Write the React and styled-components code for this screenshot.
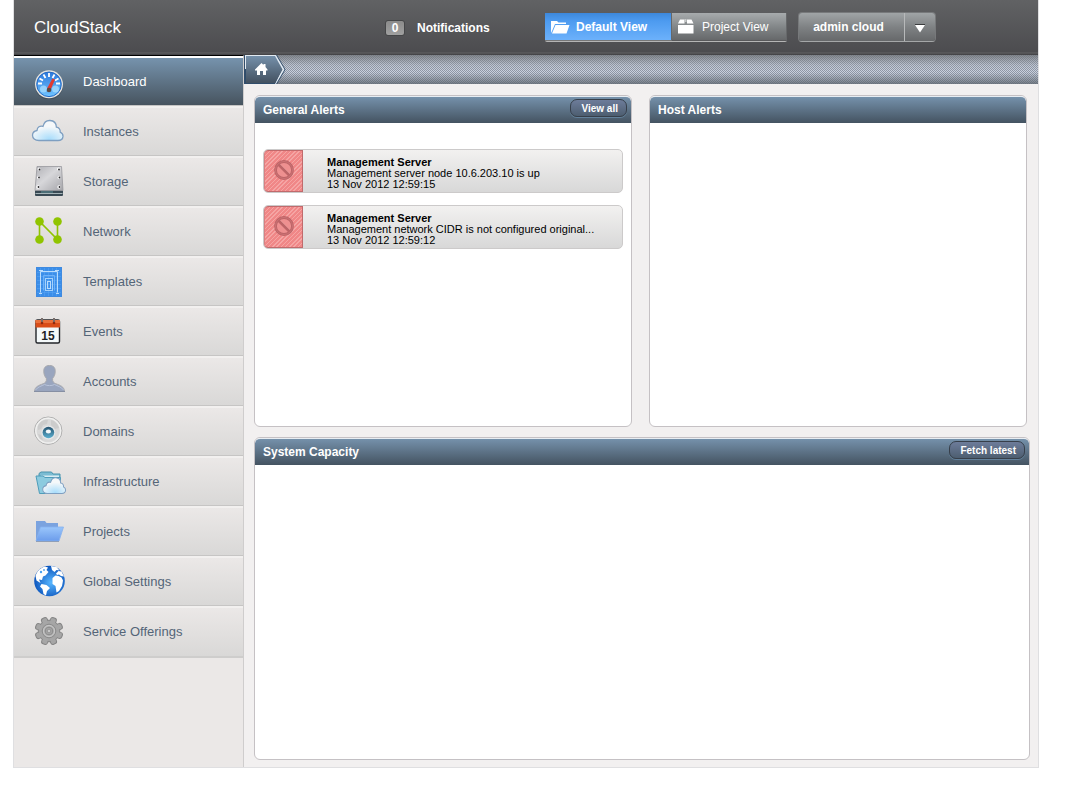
import styled, { createGlobalStyle } from "styled-components";

const GlobalStyle = createGlobalStyle`
  * {
    box-sizing: border-box;
  }
  body {
    margin: 0;
    background: #ffffff;
    font-family: "Liberation Sans", Arial, sans-serif;
    font-size: 12px;
  }
  button {
    font-family: inherit;
    cursor: pointer;
  }
`;

const Page = styled.div`
  display: flex;
  min-height: 100vh;
  padding: 0 49px 29px 13px;
`;

const Container = styled.div`
  flex: 1;
  display: flex;
  flex-direction: column;
  border: 1px solid #dfdfe1;
  border-top: 0;
  background: #f2f0f0;
`;

const Header = styled.header`
  display: flex;
  align-items: flex-start;
  height: 55px;
  padding: 12px 0 0 20px;
  color: #ffffff;
  background: linear-gradient(#616264, #4c4c4f 52px, #626264 53px, #454548 54px);
`;

const Brand = styled.h1`
  width: 351px;
  margin: 0;
  font-size: 17px;
  font-weight: normal;
  line-height: 31px;
`;

const Notifications = styled.button`
  display: flex;
  align-items: center;
  gap: 12px;
  width: 160px;
  height: 31px;
  padding: 0;
  border: 0;
  background: none;
  color: #ffffff;
  font-size: 12px;
  font-weight: bold;
`;

const Count = styled.span`
  width: 20px;
  height: 16px;
  border: 1px solid #454648;
  border-radius: 3px;
  background: linear-gradient(#8b8b8b, #a0a0a0);
  line-height: 15px;
  text-align: center;
`;

const ViewSwitch = styled.div`
  display: flex;
  width: 242px;
  height: 29px;
  margin: 1px 11px 0 0;
  border-bottom: 1px solid #b5b5b5;
  border-radius: 2px;
`;

const ViewButton = styled.button`
  display: flex;
  align-items: center;
  gap: ${(props) => (props.$active ? "6px" : "8px")};
  width: ${(props) => (props.$active ? "127px" : "115px")};
  padding: 0 0 0 6px;
  border: 0;
  border-bottom: 1px solid ${(props) => (props.$active ? "#777777" : "#59595b")};
  border-right: 1px solid #66686a;
  background: ${(props) =>
    props.$active
      ? "linear-gradient(#3d88db, #4d9bf0 30%, #6cb1fb)"
      : "linear-gradient(#a7abad, #808486 55%, #66686a)"};
  color: #ffffff;
  font-size: 12px;
  font-weight: ${(props) => (props.$active ? "bold" : "normal")};
`;

const UserMenu = styled.div`
  display: flex;
  height: 30px;
  border: 1px solid #77797b;
  border-bottom-color: #a5a7a8;
  border-radius: 4px;
  overflow: hidden;
`;

const UserButton = styled.button`
  width: ${(props) => (props.$arrow ? "31px" : "105px")};
  padding: ${(props) => (props.$arrow ? "4px 0 0" : "0 6px 0 0")};
  border: 0;
  border-left: ${(props) => (props.$arrow ? "1px solid #b7b9ba" : "0")};
  background: linear-gradient(#a0a4a6, #7f8284 50%, #66686a);
  color: #ffffff;
  font-size: 12px;
  font-weight: bold;
`;

const Body = styled.div`
  flex: 1;
  display: flex;
`;

const Sidebar = styled.nav`
  width: 230px;
  border-top: 1px solid #000000;
  border-right: 1px solid #cfcdcd;
  background: #ebe8e7;
`;

const NavList = styled.ul`
  margin: 0;
  padding: 0;
  list-style: none;
`;

const NavItem = styled.li`
  height: 50px;
  border-bottom: 1px solid #c6c5c4;
  &:last-child {
    height: 52px;
    border-bottom: 2px solid #cecdcc;
  }
`;

const NavLink = styled.a`
  display: flex;
  gap: 16px;
  height: 100%;
  padding: 5px 0 0 17px;
  border-top: 2px solid ${(props) => (props.$active ? "#ffffff" : "#f2f0ef")};
  background: ${(props) =>
    props.$active
      ? "linear-gradient(#7693ad, #47545f)"
      : "linear-gradient(#ebe8e7, #d9d8d7)"};
  color: ${(props) => (props.$active ? "#ffffff" : "#546578")};
  font-size: 13px;
  line-height: 37px;
  text-decoration: none;
  svg {
    flex: none;
  }
`;

const Main = styled.main`
  flex: 1;
  min-width: 0;
  display: flex;
  flex-direction: column;
`;

const Breadcrumbs = styled.div`
  display: flex;
  height: 29px;
  background:
    linear-gradient(#6f7378cc, #8f969e33 35%, #8f969e00 60%, #5d656ecc),
    repeating-conic-gradient(#8e96a5 0 25%, #cbd2df 0 50%) 0 0 / 2px 2px;
`;

const HomeLink = styled.a`
  display: block;
  height: 29px;
  svg {
    display: block;
  }
`;

const Dashboard = styled.div`
  flex: 1;
  display: flex;
  flex-direction: column;
  gap: 10px;
  padding: 11px 8px 7px 10px;
`;

const AlertColumns = styled.div`
  display: grid;
  grid-template-columns: 1fr 1fr;
  gap: 17px;
  min-height: 332px;
  padding-right: 3px;
`;

const Panel = styled.section`
  flex: 1;
  min-width: 0;
  border: 1px solid #c5c1c4;
  border-radius: 6px;
  background: #ffffff;
  overflow: hidden;
`;

const PanelHeader = styled.div`
  display: flex;
  justify-content: space-between;
  height: 27px;
  padding: 2px 4px 0 8px;
  border-top: 1px solid #e8edf2;
  border-radius: 5px 5px 0 0;
  background: linear-gradient(#7591ab, #445361);
`;

const PanelTitle = styled.h2`
  margin: 0;
  color: #ffffff;
  font-size: 12px;
  line-height: 23px;
`;

const PanelButton = styled.button`
  height: 18px;
  padding: 0 8px 0 10px;
  border: 1px solid #373f4a;
  border-radius: 7px;
  background: linear-gradient(#6d7c9a, #4d5e70);
  box-shadow: 0 1px #62809a;
  color: #ffffff;
  font-size: 10px;
  font-weight: bold;
`;

const AlertList = styled.ul`
  display: flex;
  flex-direction: column;
  gap: 12px;
  margin: 0;
  padding: 26px 8px;
  list-style: none;
`;

const Alert = styled.li`
  display: flex;
  height: 44px;
  border: 1px solid #cccaca;
  border-radius: 5px;
  background: linear-gradient(#f2f1f0, #d8d8d8);
  overflow: hidden;
`;

const AlertIcon = styled.div`
  display: grid;
  place-items: center;
  width: 39px;
  padding-bottom: 2px;
  border: 1px solid #c16a6c;
  border-left-color: #d98082;
  border-radius: 4px 0 0 4px;
  background: repeating-linear-gradient(135deg, #f5a5a4 0 1px, #f08787 1px 3px);
`;

const AlertText = styled.p`
  flex: 1;
  margin: 0;
  padding: 7px 0 0 24px;
  color: #000000;
  font-size: 11px;
  line-height: 11px;
  strong,
  span {
    display: block;
  }
`;

const Icon = ({ children }) => (
  <svg width="36" height="36" viewBox="0 0 36 36" aria-hidden="true">
    {children}
  </svg>
);

const DashboardIcon = () => (
  <Icon>
    <defs>
      <linearGradient id="gauge" x2="0" y2="1">
        <stop stopColor="#2c78dc" />
        <stop offset="1" stopColor="#70c4ff" />
      </linearGradient>
    </defs>
    <circle cx="18" cy="22.5" r="14" fill="#35404b" opacity=".5" />
    <circle cx="18" cy="21.3" r="14" fill="#e5e3df" />
    <circle cx="18" cy="21.3" r="12.3" fill="url(#gauge)" stroke="#256bc5" />
    <g stroke="#fff" strokeWidth="1.8">
      <path d="M18 10v4M12.500 11.500l2 3.500M23.500 11.500l-2 3.500M8.500 15.500l3.500 2M27.500 15.500l-3.500 2M7 20.500h4M29 20.500h-4" />
    </g>
    <circle cx="12.500" cy="26" r="3.500" fill="#a9dfff" opacity=".75" />
    <circle cx="24.500" cy="26" r="3.500" fill="#a9dfff" opacity=".75" />
    <path d="M21.500 15.500l2.500 1-4.500 10.500-3.500-1.500z" fill="#e23a31" />
    <circle cx="18" cy="27" r="2.300" fill="#5a4a45" />
  </Icon>
);

const cloudPath =
  "M8 27.500C3.800 27.500 1.500 25.300 1.500 22.300c0-2.700 1.700-4.300 4.500-4.800.2-3.300 3-5.200 6-4.100C13 9.500 15.700 7.300 19 7.500c3.900.2 6.300 3 6.400 6.700 2.700.3 4.100 2.300 3.800 4.900 2.200 1 2.900 2.500 2.800 4.300-.2 2.500-2.300 4.100-5 4.100z";

const CloudShape = ({ id, transform }) => (
  <g transform={transform}>
    <radialGradient id={id} cx=".55" cy=".95" r=".65">
      <stop stopColor="#a6dcfb" />
      <stop offset="1" stopColor="#f5f8fa" />
    </radialGradient>
    <path d={cloudPath} fill={`url(#${id})`} stroke="#7e9fc1" strokeWidth="1.300" />
  </g>
);

const CloudIcon = () => (
  <Icon>
    <CloudShape id="cloud" />
  </Icon>
);

const StorageIcon = () => (
  <Icon>
    <linearGradient id="disk" x2="1" y2="1">
      <stop stopColor="#b0b0b5" />
      <stop offset=".45" stopColor="#d7d7da" />
      <stop offset="1" stopColor="#a4a4a9" />
    </linearGradient>
    <path d="M4 27h28v5a1 1 0 01-1 1h-26a1 1 0 01-1-1z" fill="#394a54" />
    <path d="M4.500 30.500h27" stroke="#a5b4b8" />
    <path d="M10 29h12" stroke="#5f8f96" />
    <path d="M6 3.500h24.500l1.500 24H4z" fill="url(#disk)" stroke="#98989d" strokeWidth=".8" />
    <g fill="#fff">
      <circle cx="8" cy="6" r="1.500" />
      <circle cx="27.500" cy="6" r="1.500" />
      <circle cx="7.500" cy="14.500" r="1.500" />
      <circle cx="28" cy="14.500" r="1.500" />
      <circle cx="7" cy="24" r="1.700" />
      <circle cx="28" cy="24" r="1.700" />
    </g>
    <g fill="#27272a">
      <circle cx="8.500" cy="6.500" r=".9" />
      <circle cx="28" cy="6.500" r=".9" />
      <circle cx="8" cy="14.500" r=".9" />
      <circle cx="28.500" cy="14.500" r=".9" />
      <circle cx="7.500" cy="24" r=".9" />
      <circle cx="28.500" cy="24" r=".9" />
    </g>
  </Icon>
);

const NetworkIcon = () => (
  <Icon>
    <path d="M8.500 26.500v-18l18 18v-18" fill="none" stroke="#90c400" strokeWidth="1.600" />
    <g fill="#90c400">
      <circle cx="8.500" cy="8.500" r="4.300" />
      <circle cx="26.500" cy="8.500" r="4.300" />
      <circle cx="8.500" cy="26.500" r="4.300" />
      <circle cx="26.500" cy="26.500" r="4.300" />
    </g>
  </Icon>
);

const TemplatesIcon = () => (
  <Icon>
    <rect x="5.500" y="4.500" width="25" height="29" fill="#3b8ee9" stroke="#3f8ae0" />
    <path
      d="M9.500 5v28M13.500 5v28M17.500 5v28M21.500 5v28M25.500 5v28M6 9.500h24M6 13.500h24M6 17.500h24M6 21.500h24M6 25.500h24M6 29.500h24"
      stroke="#5aa6f4"
      strokeWidth=".5"
    />
    <g fill="none" stroke="#b9dcfd">
      <path d="M9.500 29.500v-21h17v21M8 7.500h4M24 7.500h4M8 30.500h3M25 30.500h3" />
      <path d="M12.500 27.500v-15h11v15" stroke="#6fb2f8" />
      <rect x="14.500" y="15.500" width="7" height="12" stroke="#a5d2fc" />
      <rect x="16.500" y="18.500" width="3" height="7" />
    </g>
  </Icon>
);

const EventsIcon = () => (
  <Icon>
    <rect x="5" y="7" width="23.500" height="23" rx="1.500" fill="#f4f9fa" stroke="#22252a" strokeWidth="1.400" />
    <path d="M4.500 7h24.500v7.500H4.500z" fill="#d94d18" />
    <path d="M4.500 7h24.500v3H4.500z" fill="#e9713c" />
    <path d="M11 5v5M23 5v5" stroke="#7b6f6c" strokeWidth="2" />
    <circle cx="11" cy="10" r="1.300" fill="#8e2b10" />
    <circle cx="23" cy="10" r="1.300" fill="#8e2b10" />
    <text x="17" y="27" textAnchor="middle" fontSize="12" fontWeight="bold" fill="#1c2226">
      15
    </text>
  </Icon>
);

const AccountsIcon = () => (
  <Icon>
    <path
      d="M18.500 2.500c-4.300 0-6 2.600-5.700 6.300.1 3.400 1.400 5 2.600 6.700.3 3-.8 4.200-3.200 5.200-4.500 1.800-8.300 2.700-8.700 7.800h30c-.4-5.100-4.200-6-8.700-7.800-2.400-1-3.500-2.200-3.200-5.200 1.200-1.700 2.500-3.300 2.600-6.700.3-3.700-1.400-6.300-5.700-6.300z"
      fill="#99a5be"
      stroke="#a8a9ae"
    />
    <path
      d="M4.500 27c2-3 6-4 9-5.500 3 1.500 7 1.500 10 0 3 1.500 7 2.500 9 5.500"
      fill="none"
      stroke="#b9c4da"
    />
    <path d="M3 28.500h31" stroke="#868fa3" />
  </Icon>
);

const DomainsIcon = () => (
  <Icon>
    <linearGradient id="orb" x2="0" y2="1">
      <stop stopColor="#26536f" />
      <stop offset="1" stopColor="#5cb0d0" />
    </linearGradient>
    <circle cx="17.200" cy="17.700" r="13.700" fill="#d9d9d9" stroke="#aaaaaa" />
    <circle cx="17.200" cy="17.700" r="12.400" fill="none" stroke="#f0f0ef" strokeWidth="1.500" />
    <path
      d="M7 13c2-5 7-7 10-6l-1 4-4 1-2 4-3 1zM20 7c4 1 7 4 8 8l-4 1-4-4zM7 21l3 1 2 5-3-1z"
      fill="#cccccc"
    />
    <circle cx="17.400" cy="19.500" r="7" fill="#e6e8e9" />
    <circle cx="17.400" cy="19.500" r="5.800" fill="url(#orb)" />
    <ellipse cx="17.400" cy="18.500" rx="2.600" ry="2" fill="#f3f8fa" />
  </Icon>
);

const InfrastructureIcon = () => (
  <Icon>
    <path d="M8 13V10.500L10 9h10.500l1.500 2h7v6H8z" fill="#7bbcd3" stroke="#4a93ae" />
    <path d="M10 12.500h18v3H10z" fill="#d9edf3" />
    <path d="M5 13h7l2 1.500h15.500L28 30.500H8.500z" fill="#8ccbdf" stroke="#4e9cb9" />
    <CloudShape id="smallCloud" transform="translate(10.600 8.800) scale(.75 .79)" />
  </Icon>
);

const ProjectsIcon = () => (
  <Icon>
    <linearGradient id="folder" x2="0" y2="1">
      <stop stopColor="#9ac6fb" />
      <stop offset="1" stopColor="#6b9ceb" />
    </linearGradient>
    <path d="M5 8h9l1.500 2H27v18H5z" fill="#7ba3df" />
    <path d="M9.500 14h23L28 28H5z" fill="url(#folder)" stroke="#86b1ef" strokeWidth=".8" />
    <path d="M5 28.500h23" stroke="#8f9fb8" />
  </Icon>
);

const GlobeIcon = () => (
  <Icon>
    <radialGradient id="globe" cx=".55" cy=".55" r=".55">
      <stop stopColor="#57b6ff" />
      <stop offset="1" stopColor="#0c55bd" />
    </radialGradient>
    <circle cx="18.500" cy="18" r="15.300" fill="url(#globe)" />
    <g fill="#fff">
      <path d="M4.500 13C6 8 10 4.500 14 3.500l3 1-1.500 2.500 2 2-3 3.500-2.500 1-1 3.500-3-.5 1.500 3.500-4-2.500z" />
      <path d="M10.500 21l5 1 3.500 3-3 3-1 4.500-2.500-1.500-1-5-2.500-2.500z" />
      <path d="M20 3l5.500 1 3 3.500-3-.5-2 2-2.500-2z" />
      <path d="M21.500 15l3-2.500 3 .5 3 1.500 1.500 3-1 5.500-3 5-2.500 1.500-1-6.500-3-2z" />
      <path d="M25 10.500l2.500-2.500 3 .5 2.500 5-3-.5-2-1.500-2 .5z" />
    </g>
    <circle cx="10" cy="9" r="1.200" fill="#4ba1ef" />
    <circle cx="13" cy="7" r=".9" fill="#4ba1ef" />
  </Icon>
);

const teeth = [22, 67, 112, 157, 202, 247, 292, 337];

const GearIcon = () => (
  <Icon>
    <g fill="#a3a3a3" stroke="#858585" strokeWidth="1">
      {teeth.map((angle) => (
        <rect key={angle} x="15" y="4" width="6" height="9" rx="2.200" transform={`rotate(${angle} 18 18)`} />
      ))}
      <circle cx="18" cy="18" r="10.800" />
    </g>
    <g fill="#a6a6a6">
      {teeth.map((angle) => (
        <rect key={angle} x="15.500" y="5" width="5" height="8" rx="2" transform={`rotate(${angle} 18 18)`} />
      ))}
    </g>
    <circle cx="18" cy="18" r="6.800" fill="#aeaeae" stroke="#8b8b8b" />
    <circle cx="18" cy="18" r="5.500" fill="none" stroke="#c9c9c9" />
    <circle cx="18" cy="18" r="3.800" fill="#a8a8a8" stroke="#8b8b8b" />
    <circle cx="18" cy="18" r="1.900" fill="#c8c8c8" stroke="#919191" />
  </Icon>
);

const HomeTab = () => (
  <svg width="42" height="29" viewBox="0 0 42 29" aria-hidden="true">
    <defs>
      <linearGradient id="crumb" x2="0" y2="1">
        <stop stopColor="#7590aa" />
        <stop offset="1" stopColor="#435160" />
      </linearGradient>
    </defs>
    <path d="M0 0h33l8.500 14.500L33 29H0z" fill="#314d6b" />
    <path d="M1 0h31l8.500 14.500L32 29h-1L38 14.500z" fill="#e2eaf2" />
    <path d="M1 0h31v14H1z" fill="#e2eaf2" />
    <path d="M2 1h29l7.500 13.500L31 28H2z" fill="url(#crumb)" />
    <path d="M11 14.500L17.500 8l2 2V9h2v3l2 2.500v1H22v4.500h-3v-4h-3v4h-3v-4.500h-2z" fill="#fff" />
  </svg>
);

const FolderGlyph = () => (
  <svg width="19" height="14" viewBox="0 0 19 14" aria-hidden="true">
    <path d="M0 1h6l1.500 1.500H15V4H4L1 11 0 13z" fill="#fff" />
    <path d="M4.500 5H18.500L15.500 13.500H1z" fill="#fff" />
  </svg>
);

const BoxGlyph = () => (
  <svg width="16" height="15" viewBox="0 0 16 15" aria-hidden="true">
    <path d="M2 .5h4.500v4H0zM9 .5h4.500l2 4H9zM0 6h15.500v8.500H0z" fill="#fff" />
    <path d="M6.500 0h2v3h-2z" fill="#c8caca" />
  </svg>
);

const ForbiddenIcon = () => (
  <svg width="22" height="22" viewBox="0 0 22 22" aria-hidden="true">
    <circle cx="11" cy="11" r="8" fill="#ee9090" />
    <path d="M6.500 4.500l11 11" stroke="#f9b4b3" />
    <g fill="none" stroke="#bd6467" strokeWidth="2.800">
      <circle cx="11" cy="11" r="8.500" />
      <path d="M5 5l12 12" />
    </g>
    <circle cx="11" cy="11" r="8.500" fill="none" stroke="#cd7375" />
  </svg>
);

const menu = [
  { label: "Dashboard", icon: DashboardIcon, active: true },
  { label: "Instances", icon: CloudIcon },
  { label: "Storage", icon: StorageIcon },
  { label: "Network", icon: NetworkIcon },
  { label: "Templates", icon: TemplatesIcon },
  { label: "Events", icon: EventsIcon },
  { label: "Accounts", icon: AccountsIcon },
  { label: "Domains", icon: DomainsIcon },
  { label: "Infrastructure", icon: InfrastructureIcon },
  { label: "Projects", icon: ProjectsIcon },
  { label: "Global Settings", icon: GlobeIcon },
  { label: "Service Offerings", icon: GearIcon },
];

const alerts = [
  { text: "Management server node 10.6.203.10 is up", date: "13 Nov 2012 12:59:15" },
  { text: "Management network CIDR is not configured original...", date: "13 Nov 2012 12:59:12" },
];

export default function App() {
  return (
    <Page>
      <GlobalStyle />
      <Container>
        <Header>
          <Brand>CloudStack</Brand>
          <Notifications>
            <Count>0</Count>
            Notifications
          </Notifications>
          <ViewSwitch>
            <ViewButton $active>
              <FolderGlyph />
              Default View
            </ViewButton>
            <ViewButton>
              <BoxGlyph />
              Project View
            </ViewButton>
          </ViewSwitch>
          <UserMenu>
            <UserButton>admin cloud</UserButton>
            <UserButton $arrow aria-label="User options">
              <svg width="12" height="9" viewBox="0 0 12 9" aria-hidden="true">
                <path d="M1 .5h10" stroke="#3b3c3e" />
                <path d="M1 1h10L6 8.500z" fill="#fff" />
              </svg>
            </UserButton>
          </UserMenu>
        </Header>
        <Body>
          <Sidebar>
            <NavList>
              {menu.map(({ label, icon: ItemIcon, active }) => (
                <NavItem key={label}>
                  <NavLink href="#" $active={active}>
                    <ItemIcon />
                    {label}
                  </NavLink>
                </NavItem>
              ))}
            </NavList>
          </Sidebar>
          <Main>
            <Breadcrumbs>
              <HomeLink href="#" aria-label="Home">
                <HomeTab />
              </HomeLink>
            </Breadcrumbs>
            <Dashboard>
              <AlertColumns>
                <Panel>
                  <PanelHeader>
                    <PanelTitle>General Alerts</PanelTitle>
                    <PanelButton>View all</PanelButton>
                  </PanelHeader>
                  <AlertList>
                    {alerts.map((alert) => (
                      <Alert key={alert.date}>
                        <AlertIcon>
                          <ForbiddenIcon />
                        </AlertIcon>
                        <AlertText>
                          <strong>Management Server</strong>
                          <span>{alert.text}</span>
                          <span>{alert.date}</span>
                        </AlertText>
                      </Alert>
                    ))}
                  </AlertList>
                </Panel>
                <Panel>
                  <PanelHeader>
                    <PanelTitle>Host Alerts</PanelTitle>
                  </PanelHeader>
                </Panel>
              </AlertColumns>
              <Panel>
                <PanelHeader>
                  <PanelTitle>System Capacity</PanelTitle>
                  <PanelButton>Fetch latest</PanelButton>
                </PanelHeader>
              </Panel>
            </Dashboard>
          </Main>
        </Body>
      </Container>
    </Page>
  );
}
